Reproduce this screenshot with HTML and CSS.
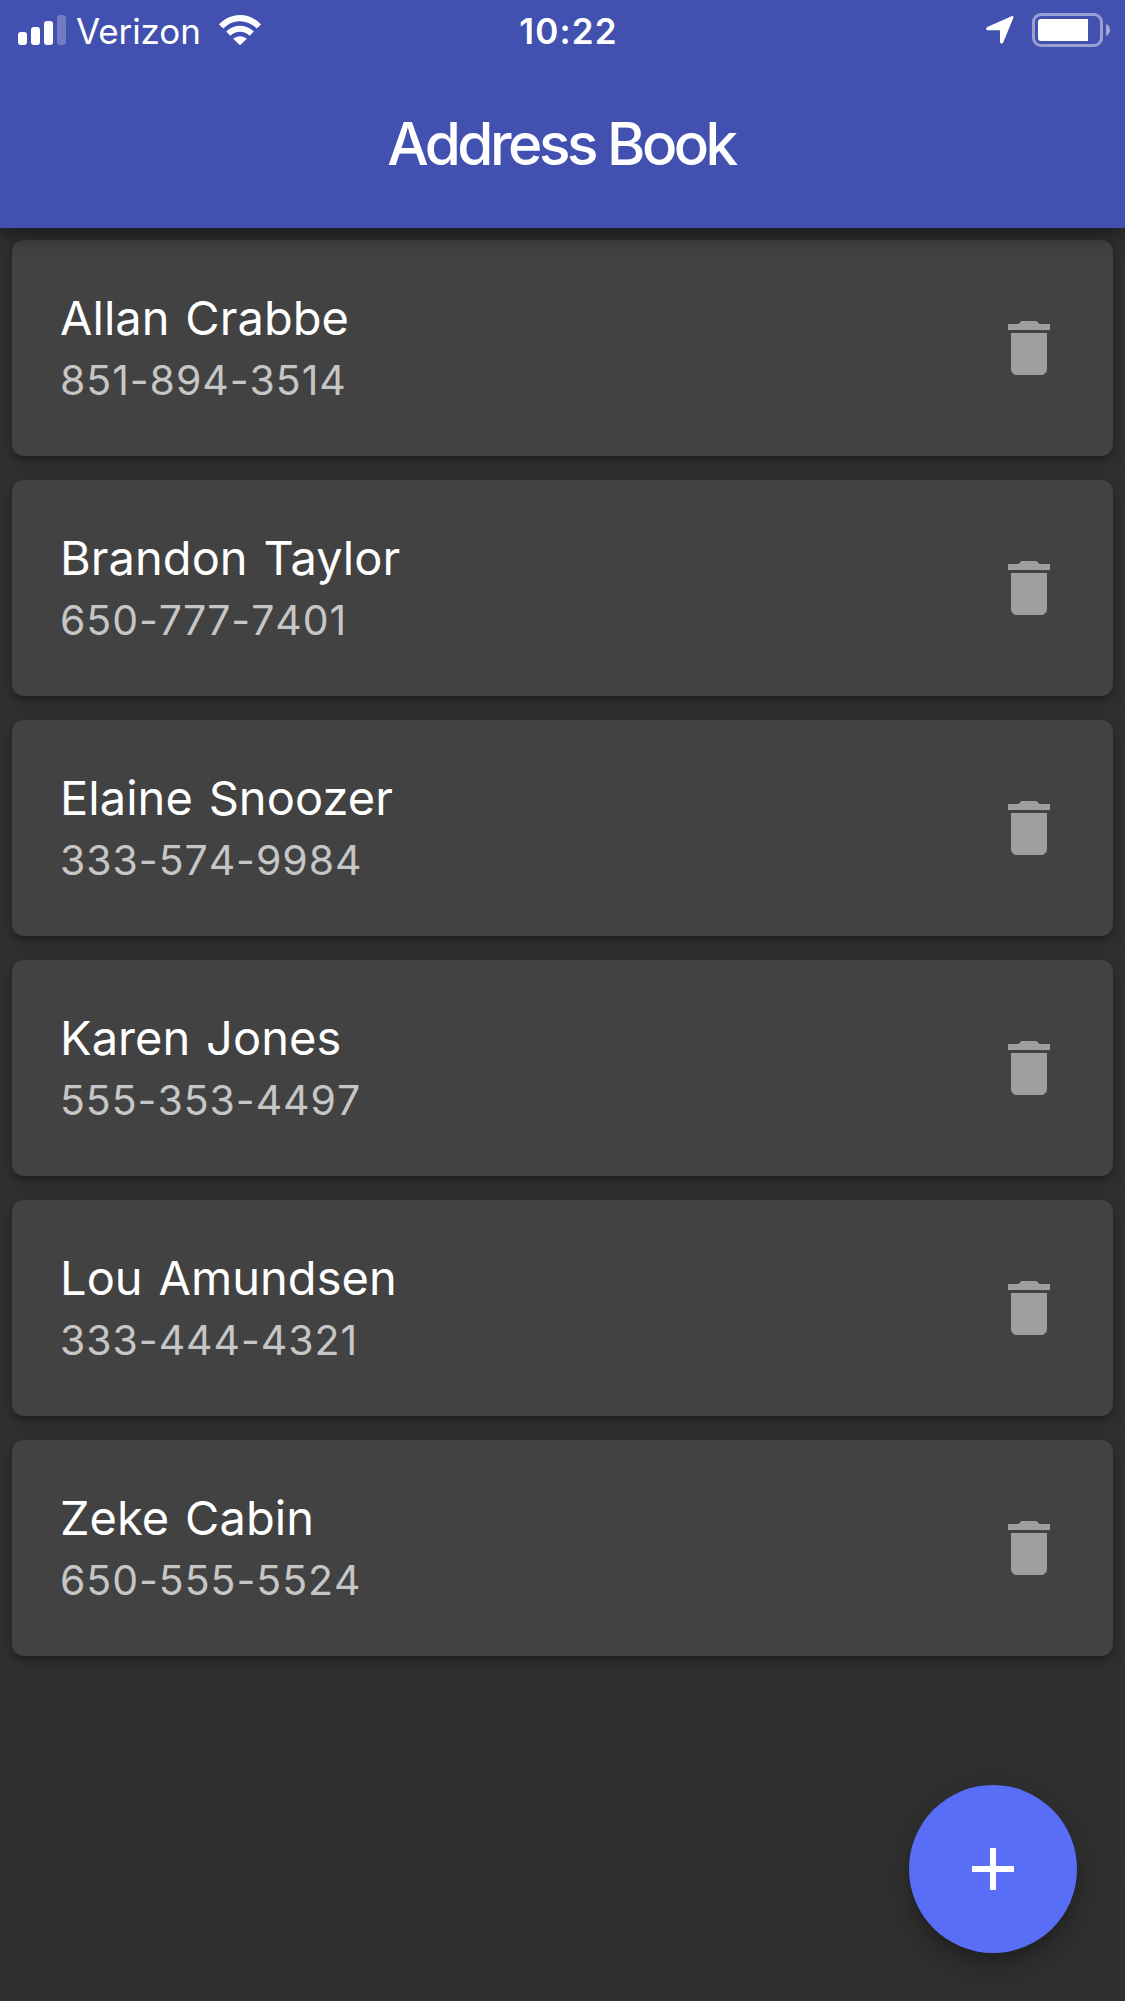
FILE: index.html
```html
<!DOCTYPE html>
<html lang="en">
<head>
<meta charset="utf-8">
<title>Address Book</title>
<link rel="stylesheet" href="styles.css">
</head>
<body>
<svg class="sprite" aria-hidden="true">
  <symbol id="trash" viewBox="0 0 24 24"><path d="M6 19c0 1.1.9 2 2 2h8c1.1 0 2-.9 2-2V7H6v12zM19 4h-3.5l-1-1h-5l-1 1H5v2h14V4z"/></symbol>
</svg>
<header class="app-bar">
  <div class="status">
    <div class="status-left">
      <svg class="signal" viewBox="0 0 48 30" width="48" height="30">
        <rect x="0" y="17" width="9" height="13" rx="3"/><rect x="13" y="12" width="9" height="18" rx="3"/><rect x="26" y="6" width="9" height="24" rx="3"/><rect class="faint" x="39" y="0" width="9" height="30" rx="3"/>
      </svg>
      <span class="carrier">Verizon</span>
      <svg class="wifi" viewBox="0 0 42 30" width="42" height="30">
        <path d="M0 9.5C11.500-3.170 30.500-3.170 42 9.500L37.700 13.500C28.500 3.700 13.500 3.700 4.300 13.500Z"/>
        <path d="M7.200 16.500C15 8.700 27 8.700 34.800 16.500L30.700 20.700C25.200 15.500 16.800 15.500 11.300 20.700Z"/>
        <path d="M14.200 23.700C18 20.300 24 20.300 27.800 23.700L21 30.300Z"/>
      </svg>
    </div>
    <span class="time">10:22</span>
    <div class="status-right">
      <svg class="location" viewBox="0 0 28 28" width="28" height="28"><path d="M25.500.2C26.900-.3 27.800.6 27.300 2L17.200 26.400C16.500 28.200 14 27.800 14 25.800V14.300H2C0 14.300-.4 11.800 1.300 11Z"/></svg>
      <svg class="battery" viewBox="0 0 78 34" width="78" height="34">
        <rect class="shell" x="1.500" y="1.500" width="68" height="31" rx="7.500"/>
        <path d="M9 6H56V28H9Q6 28 6 25V9Q6 6 9 6Z"/>
        <path class="nub" d="M74 11Q78 12.500 78 17T74 23Z"/>
      </svg>
    </div>
  </div>
  <h1 class="title">Address Book</h1>
</header>
<main class="contacts">
  <article class="card"><div><div class="name">Allan Crabbe</div><div class="phone">851-894-3514</div></div><svg class="trash"><use href="#trash"/></svg></article>
  <article class="card"><div><div class="name">Brandon Taylor</div><div class="phone">650-777-7401</div></div><svg class="trash"><use href="#trash"/></svg></article>
  <article class="card"><div><div class="name">Elaine Snoozer</div><div class="phone">333-574-9984</div></div><svg class="trash"><use href="#trash"/></svg></article>
  <article class="card"><div><div class="name">Karen Jones</div><div class="phone">555-353-4497</div></div><svg class="trash"><use href="#trash"/></svg></article>
  <article class="card"><div><div class="name">Lou Amundsen</div><div class="phone">333-444-4321</div></div><svg class="trash"><use href="#trash"/></svg></article>
  <article class="card"><div><div class="name">Zeke Cabin</div><div class="phone">650-555-5524</div></div><svg class="trash"><use href="#trash"/></svg></article>
</main>
<button class="fab" aria-label="Add contact"><svg viewBox="0 0 24 24" width="72" height="72"><path d="M19 13h-6v6h-2v-6H5v-2h6V5h2v6h6v2z"/></svg></button>
</body>
</html>
```
FILE: styles.css
```css
* { box-sizing: border-box; }
body {
  margin: 0;
  min-height: 2001px;
  background: #303030;
  color: #fff;
  font-family: Inter, "Liberation Sans", sans-serif;
}
svg { display: block; fill: #fff; }
.sprite { display: none; }
.app-bar {
  position: relative;
  z-index: 1;
  height: 228px;
  background: #4251af;
  box-shadow: 0 6px 12px -3px rgba(0,0,0,.2), 0 12px 15px rgba(0,0,0,.14), 0 3px 30px rgba(0,0,0,.12);
}
.status {
  display: grid;
  grid-template-columns: 1fr auto 1fr;
  height: 60px;
  padding: 0 15px 0 18px;
  align-items: center;
}
.status-left, .status-right { display: flex; align-items: center; }
.status-right { justify-content: flex-end; gap: 18px; }
.faint { opacity: .25; }
.carrier { margin: 1px 0 0 10px; width: 125px; font-size: 35px; line-height: 42px; letter-spacing: -.1px; }
.wifi { margin-left: 18px; }
.time { margin: 1px 0 0 9px; font-size: 35px; line-height: 42px; font-weight: 600; letter-spacing: 1.2px; }
.shell { fill: none; stroke: #fff; stroke-width: 3; opacity: .45; }
.nub { opacity: .5; }
.title {
  margin: 0;
  height: 168px;
  line-height: 168px;
  font-size: 58.5px;
  font-weight: 550;
  text-align: center;
  letter-spacing: -3.5px;
  text-indent: -3px;
}
.contacts { display: flex; flex-direction: column; gap: 24px; padding: 12px; }
.card {
  display: flex;
  align-items: center;
  justify-content: space-between;
  height: 216px;
  padding: 0 48px;
  border-radius: 12px;
  background: #424242;
  box-shadow: 0 3px 15px rgba(0,0,0,.2), 0 6px 6px rgba(0,0,0,.14), 0 9px 3px -6px rgba(0,0,0,.12);
}
.name { font-size: 47px; line-height: 66px; letter-spacing: .05px; word-spacing: 2.5px; }
.phone {
  margin: -1px 0 1px;
  font-size: 41px;
  line-height: 60px;
  letter-spacing: .95px;
  font-kerning: none;
  font-feature-settings: "calt" 0;
  color: #c6c6c6;
}
.trash { width: 72px; height: 72px; fill: #9f9f9f; }
.fab {
  position: fixed;
  right: 48px;
  bottom: 48px;
  display: grid;
  place-items: center;
  width: 168px;
  height: 168px;
  padding: 0;
  border: 0;
  border-radius: 50%;
  background: #596ef7;
  box-shadow: 0 9px 15px -3px rgba(0,0,0,.2), 0 18px 30px rgba(0,0,0,.14), 0 3px 54px rgba(0,0,0,.12);
}
```
